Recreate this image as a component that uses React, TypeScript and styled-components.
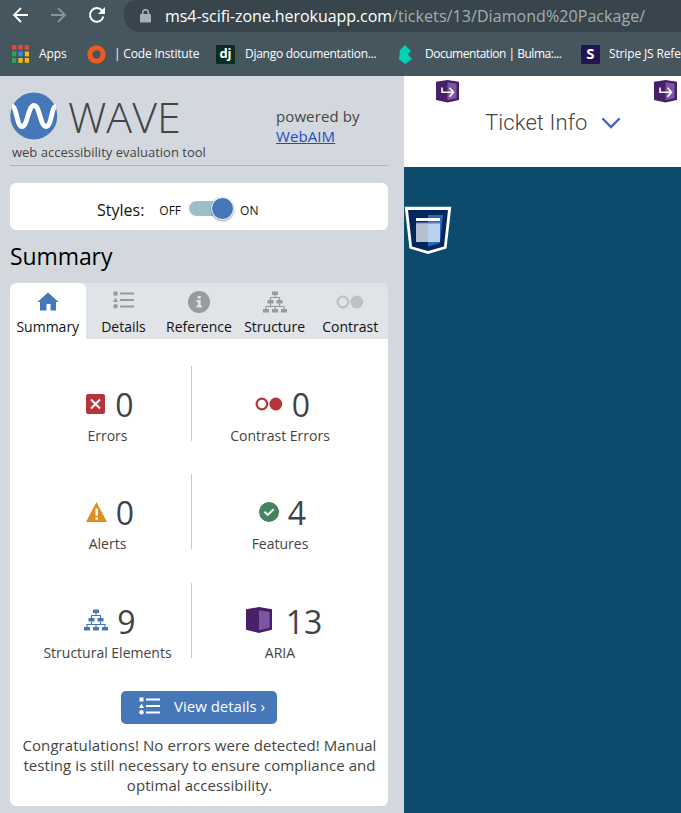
import React from "react";
import styled, { createGlobalStyle, css } from "styled-components";

const GlobalStyle = createGlobalStyle`
  * { box-sizing: border-box; }
  html, body { margin: 0; padding: 0; overflow: hidden; }
  body { font-family: "Open Sans", "Noto Sans", sans-serif; color: #3f4347; }
  svg { display: block; flex: none; }
`;

const Screen = styled.div`
  width: 681px;
  height: 813px;
  overflow: hidden;
  display: flex;
  flex-direction: column;
  background: #0c4b6c;
`;

/* Browser chrome */

const Browser = styled.header`
  height: 76px;
  flex: none;
  background: #46565f;
`;

const Toolbar = styled.div`
  height: 32px;
  display: flex;
`;

const NavButtons = styled.div`
  width: 124px;
  padding: 6px 0 0 12px;
  display: flex;
  gap: 21px;
`;

const AddressBar = styled.div`
  flex: 1;
  display: flex;
  align-items: center;
  padding: 0 0 1px 16px;
  background: #38454c;
  border-radius: 12px 0 0 16px;
  white-space: nowrap;
`;

const Url = styled.div`
  margin-left: 14px;
  font: 400 16px/24px "Open Sans", sans-serif;
  letter-spacing: -0.06px;
  color: #fff;
`;

const UrlPath = styled.span`
  color: #a5adb2;
  letter-spacing: 0.07px;
`;

const Bookmarks = styled.nav`
  height: 44px;
  padding-left: 12px;
  display: flex;
  overflow: hidden;
  white-space: nowrap;
`;

const Bookmark = styled.div<{ $width: number; $gap: number; $spacing: number }>`
  width: ${(p) => p.$width}px;
  flex: none;
  display: flex;
  align-items: center;
  gap: ${(p) => p.$gap}px;
  font: 400 12px/18px "Open Sans", sans-serif;
  letter-spacing: ${(p) => p.$spacing}px;
  color: #fff;
`;

const Favicon = styled.span<{ $bg: string; $size: number }>`
  width: 19px;
  height: 19px;
  flex: none;
  display: flex;
  justify-content: center;
  align-items: center;
  padding-bottom: 2px;
  background: ${(p) => p.$bg};
  border-radius: 1px;
  font: 700 ${(p) => p.$size}px/17px "Open Sans", sans-serif;
  letter-spacing: 0;
  color: #fff;
`;

/* Content */

const Content = styled.div`
  flex: 1;
  display: flex;
  min-height: 0;
`;

const Sidebar = styled.aside`
  width: 404px;
  flex: none;
  padding: 0 16px 0 10px;
  background: #d3d8df;
`;

const Brand = styled.div`
  height: 90px;
  border-bottom: 1px solid #aeb3bf;
  display: grid;
  grid-template-columns: 266px 1fr;
`;

const LogoRow = styled.div`
  height: 66px;
  padding-top: 16px;
  display: flex;
  gap: 10px;
`;

const Wordmark = styled.div`
  padding-top: 1px;
  font-size: 43px;
  line-height: 48px;
  font-weight: 300;
  color: #444;
`;

const Tagline = styled.div`
  padding-left: 2px;
  font-size: 13px;
  line-height: 20px;
  white-space: nowrap;
  color: #444;
`;

const Powered = styled.div`
  padding-top: 30px;
  font-size: 15px;
  line-height: 20px;
  letter-spacing: 0.1px;
  color: #444;
`;

const Link = styled.a`
  color: #1a4fc4;
  text-decoration: underline;
`;

const StylesBox = styled.div`
  height: 47px;
  margin-top: 17px;
  padding: 6px 0 0 87px;
  display: flex;
  align-items: center;
  border-radius: 6px;
  background: #fff;
  font-size: 16px;
  color: #111;
`;

const SwitchLabel = styled.span<{ $left: number; $right?: number }>`
  margin: 1px ${(p) => p.$right ?? 0}px 0 ${(p) => p.$left}px;
  font-size: 12px;
`;

const Track = styled.div`
  width: 45px;
  height: 15px;
  margin-bottom: 2px;
  border-radius: 8px;
  background: #9cbfc7;
  display: flex;
  justify-content: flex-end;
  align-items: center;
`;

const Knob = styled.div`
  width: 23px;
  height: 23px;
  flex: none;
  border-radius: 50%;
  border: 1px solid #fff;
  background: #4677b8;
  box-shadow: 0 1px 2px rgba(0, 0, 0, 0.35);
`;

const Title = styled.h1`
  margin: 10px 0 0;
  height: 43px;
  font-size: 23px;
  line-height: 32px;
  font-weight: 400;
  letter-spacing: -0.1px;
  color: #000;
`;

const Tabs = styled.div`
  height: 56px;
  display: grid;
  grid-template-columns: repeat(5, 1fr);
  border-radius: 6px 6px 0 0;
  overflow: hidden;
  background: #e0e3e8;
`;

const Tab = styled.div<{ $active?: boolean }>`
  display: flex;
  flex-direction: column;
  align-items: center;
  font-size: 14px;
  line-height: 20px;
  white-space: nowrap;
  color: #111;
  ${(p) =>
    p.$active &&
    css`
      background: #fff;
      border-radius: 6px 6px 0 0;
    `}
`;

const TabIcon = styled.div<{ $raised?: boolean }>`
  height: 34px;
  padding-top: ${(p) => (p.$raised ? 0 : 3)}px;
  display: flex;
  align-items: center;
`;

const Panel = styled.section`
  height: 467px;
  padding: 27px 10px 0 14px;
  border-radius: 0 0 6px 6px;
  background: #fff;
`;

const Stats = styled.div`
  display: grid;
  grid-template-columns: 168px 176px;
  grid-auto-rows: 75px;
  row-gap: 33.4px;
`;

const Stat = styled.div<{ $divided?: boolean }>`
  border-right: ${(p) => (p.$divided ? "1px solid #c6c8ca" : "0")};
  display: flex;
  flex-direction: column;
  align-items: center;
  padding-top: 17px;
`;

const StatValue = styled.div<{ $gap: number }>`
  height: 43px;
  padding-left: ${(p) => (p.$gap > 10 ? 8 : 5)}px;
  display: flex;
  align-items: center;
  gap: ${(p) => p.$gap}px;
  font-size: 32px;
  line-height: 43px;
  color: #3f4347;
`;

const StatIcon = styled.span`
  margin-bottom: 2px;
`;

const StatLabel = styled.div`
  font-size: 14px;
  line-height: 19px;
  white-space: nowrap;
  color: #444;
`;

const DetailsButton = styled.button`
  width: 156px;
  height: 33px;
  margin: 33px 0 0 97px;
  padding: 0 0 2px 18px;
  display: flex;
  align-items: center;
  gap: 14px;
  border: 0;
  border-radius: 5px;
  background: #4677b8;
  color: #fff;
  font: 400 15px/20px "Open Sans", sans-serif;
  white-space: nowrap;
`;

const Message = styled.p`
  margin: 11px -2px 0 -5px;
  text-align: center;
  font-size: 15px;
  line-height: 20px;
  letter-spacing: 0.07px;
  white-space: nowrap;
  color: #444;
`;

const Site = styled.main`
  flex: 1;
  min-width: 0;
`;

const TicketBar = styled.div`
  height: 91px;
  padding: 4px 4px 0 32px;
  background: #fff;
`;

const Markers = styled.div`
  display: flex;
  justify-content: space-between;
`;

const TicketTitle = styled.div`
  padding: 4px 0 0 49px;
  display: flex;
  align-items: center;
  gap: 13px;
  font: 300 22px/32px Roboto, sans-serif;
  letter-spacing: 0.1px;
  color: #444;
  white-space: nowrap;
`;

const PageArea = styled.div`
  padding-top: 39px;
`;

/* Icons */

const ArrowIcon = ({ back }: { back?: boolean }) => (
  <svg width="17" height="18" viewBox="0 0 17 18" fill="none" stroke={back ? "#fff" : "#87929a"} strokeWidth="1.8">
    <path d={back ? "M16 9H2M9 2 2 9l7 7" : "M1 9h14M8 2l7 7-7 7"} />
  </svg>
);

const ReloadIcon = () => (
  <svg width="18" height="18" viewBox="0 0 18 18">
    <path d="M15.4 10.6a6.8 6.8 0 1 1-1.5-6.2l1.5 1.8" fill="none" stroke="#fff" strokeWidth="2" />
    <path d="M17 1v7h-7z" fill="#fff" />
  </svg>
);

const LockIcon = () => (
  <svg width="11" height="14" viewBox="0 0 11 14">
    <path d="M2.7 6V3.5a2.8 2.8 0 0 1 5.6 0V6" fill="none" stroke="#a9afb3" strokeWidth="1.6" />
    <rect y="5" width="11" height="8.5" rx="1" fill="#a9afb3" />
  </svg>
);

const appColors = ["#e8453c", "#e8453c", "#e8453c", "#34a05f", "#2f8de4", "#f2b91d", "#34a05f", "#f2b91d", "#f2b91d"];

const AppsIcon = () => (
  <svg width="17" height="18" viewBox="0 0 17 18">
    {appColors.map((c, i) => (
      <rect key={i} x={(i % 3) * 6.4} y={Math.floor(i / 3) * 6.5} width="4.3" height="4.8" fill={c} />
    ))}
  </svg>
);

const RingIcon = () => (
  <svg width="19" height="19" viewBox="0 0 19 19">
    <circle cx="9.5" cy="9.5" r="6.7" fill="none" stroke="#ee5a24" strokeWidth="5" />
  </svg>
);

const BulmaIcon = () => (
  <svg width="13" height="19" viewBox="0 0 13 19">
    <path d="M6 0 12 6 9 9.3 13 14 6.3 19 0 14.5 1 5z" fill="#00d1b2" />
  </svg>
);

const WaveLogo = () => (
  <svg width="48" height="48" viewBox="0 0 48 48">
    <circle cx="23.8" cy="24" r="23.5" fill="#4677b8" />
    <path
      d="M2 14.5C7 14.5 6.500 34.500 12 34.500S18 13.500 24 13.500s6 21 12 21S41 14.500 46 14.500"
      fill="none"
      stroke="#fff"
      strokeWidth="4.8"
    />
  </svg>
);

const HomeIcon = () => (
  <svg width="22" height="19" viewBox="0 0 22 19">
    <path d="M11 .5 21.500 10H19v8.500h-5.500V12h-4v6.500H3V10H.5z" fill="#4677b8" />
  </svg>
);

const ListIcon = ({ color }: { color: string }) => (
  <svg width="21" height="18" viewBox="0 0 21 18" fill={color}>
    <rect x=".5" y=".5" width="4" height="4" />
    <path d="M2.500 6.500 5 11H0z" />
    <circle cx="2.500" cy="15.300" r="2.200" />
    <rect x="7" y="1.500" width="14" height="2" />
    <rect x="7" y="8" width="14" height="2" />
    <rect x="7" y="14.500" width="14" height="2" />
  </svg>
);

const InfoIcon = () => (
  <svg width="22" height="22" viewBox="0 0 22 22">
    <circle cx="11" cy="11" r="11" fill="#999a9c" />
    <rect x="9.700" y="5" width="3" height="2.600" fill="#e0e3e8" />
    <path d="M8.500 9h4.200v5.500H14v2H8.500v-2h1.400V11H8.500z" fill="#e0e3e8" />
  </svg>
);

const TreeIcon = ({ color }: { color: string }) => (
  <svg width="24" height="22" viewBox="0 0 24 22" fill={color}>
    <rect x="9" y=".5" width="6" height="3.500" />
    <rect x="4.500" y="9" width="6" height="3.500" />
    <rect x="13.500" y="9" width="6" height="3.500" />
    <rect x="0" y="18" width="6" height="3.500" />
    <rect x="9" y="18" width="6" height="3.500" />
    <rect x="18" y="18" width="6" height="3.500" />
    <path
      d="M12 3.500v3M7.500 9.500V6.500h9v3M7.500 12.500v3M16.500 12.500v3M3 18.500v-3h18v3M12 15.500v3"
      fill="none"
      stroke={color}
      strokeWidth="1.200"
    />
  </svg>
);

const ContrastIcon = ({ color }: { color: string }) => (
  <svg width="28" height="14" viewBox="0 0 28 14">
    <circle cx="6.900" cy="7" r="5.300" fill="none" stroke={color} strokeWidth="2.200" />
    <circle cx="20.800" cy="7" r="6.400" fill={color} />
  </svg>
);

const ErrorIcon = () => (
  <svg width="19" height="20" viewBox="0 0 19 20">
    <rect width="19" height="20" rx="2" fill="#b63538" />
    <path d="m5 5.500 9 9m0-9-9 9" stroke="#fff" strokeWidth="2" />
  </svg>
);

const AlertIcon = () => (
  <svg width="21" height="20" viewBox="0 0 21 20">
    <path d="M10.500 0 21 20H0z" fill="#df8e20" />
    <path d="M9.500 6.500h2.400v7.300H9.500zM9.500 15.300h2.400v2.400H9.500z" fill="#fff" />
  </svg>
);

const CheckIcon = () => (
  <svg width="20" height="20" viewBox="0 0 20 20">
    <circle cx="10" cy="10" r="10" fill="#43835f" />
    <path d="m5.500 9.700 3.200 3.200 6-5.700" fill="none" stroke="#fff" strokeWidth="2" />
  </svg>
);

const AriaIcon = () => (
  <svg width="26" height="26" viewBox="0 0 26 26">
    <path d="M0 2.300 13 0l13 2.300v20.400L13 26 0 22.700z" fill="#472067" />
    <path d="M13 3.200 23.500 5v15.800L13 23.300z" fill="#7c56a0" />
  </svg>
);

const MarkerIcon = () => (
  <svg width="23" height="23" viewBox="0 0 23 23">
    <path d="M0 1.700 11.500 0 23 1.700v18.200L11.500 22.500 0 19.900z" fill="#472067" />
    <path d="m11.500 2.300 9 1.400V18l-9 2.300z" fill="#7c56a0" />
    <path d="M6 7.500v4.700h11M13.500 7.700l4 4.500-4 4.500" fill="none" stroke="#fff" strokeWidth="1.600" />
  </svg>
);

const ChevronIcon = () => (
  <svg width="20" height="12" viewBox="0 0 20 12" fill="none" stroke="#485fc7" strokeWidth="2.400" strokeLinecap="round">
    <path d="m2 2 8 8 8-8" />
  </svg>
);

const RegionIcon = () => (
  <svg width="48" height="49" viewBox="0 0 48 49">
    <path d="M.7.7h46.600L42.500 42.500 24 48 5.500 42.500z" fill="#fff" />
    <path d="M4 4h40l-4 36.400L24 45 8 40.400z" fill="#03265b" />
    <path d="M24 9h15l-3 28-12 3.500z" fill="#2868c5" />
    <path d="M12 18h12v18H12z" fill="#b4c0d0" />
    <path d="M24 18h12v18H24z" fill="#b9d2f0" />
    <path d="M12 12h24v3H12z" fill="#fff" />
    <path d="M12 16.500h24v1.500H12z" fill="#8fa3c4" />
  </svg>
);

const tabs = [
  { label: "Summary", icon: <HomeIcon />, active: true },
  { label: "Details", icon: <ListIcon color="#999a9c" />, raised: true },
  { label: "Reference", icon: <InfoIcon /> },
  { label: "Structure", icon: <TreeIcon color="#999a9c" /> },
  { label: "Contrast", icon: <ContrastIcon color="#bfc0c2" /> },
];

const stats = [
  { label: "Errors", value: 0, gap: 10, icon: <ErrorIcon /> },
  { label: "Contrast Errors", value: 0, gap: 9, icon: <ContrastIcon color="#b63538" /> },
  { label: "Alerts", value: 0, gap: 9, icon: <AlertIcon /> },
  { label: "Features", value: 4, gap: 9, icon: <CheckIcon /> },
  { label: "Structural Elements", value: 9, gap: 9, icon: <TreeIcon color="#4677b8" /> },
  { label: "ARIA", value: 13, gap: 14, icon: <AriaIcon /> },
];

export default function App() {
  return (
    <Screen>
      <GlobalStyle />
      <Browser>
        <Toolbar>
          <NavButtons>
            <ArrowIcon back />
            <ArrowIcon />
            <ReloadIcon />
          </NavButtons>
          <AddressBar>
            <LockIcon />
            <Url>
              ms4-scifi-zone.herokuapp.com<UrlPath>/tickets/13/Diamond%20Package/</UrlPath>
            </Url>
          </AddressBar>
        </Toolbar>
        <Bookmarks>
          <Bookmark $width={75} $gap={10} $spacing={-0.1}>
            <AppsIcon />
            Apps
          </Bookmark>
          <Bookmark $width={129} $gap={8} $spacing={-0.18}>
            <RingIcon />| Code Institute
          </Bookmark>
          <Bookmark $width={183} $gap={10} $spacing={-0.28}>
            <Favicon $bg="#092e20" $size={13}>dj</Favicon>
            Django documentation...
          </Bookmark>
          <Bookmark $width={182} $gap={13} $spacing={-0.48}>
            <BulmaIcon />
            Documentation | Bulma:...
          </Bookmark>
          <Bookmark $width={100} $gap={9} $spacing={-0.15}>
            <Favicon $bg="#211551" $size={15}>S</Favicon>
            Stripe JS Refe
          </Bookmark>
        </Bookmarks>
      </Browser>
      <Content>
        <Sidebar>
          <Brand>
            <div>
              <LogoRow>
                <WaveLogo />
                <Wordmark>WAVE</Wordmark>
              </LogoRow>
              <Tagline>web accessibility evaluation tool</Tagline>
            </div>
            <Powered>
              powered by
              <br />
              <Link>WebAIM</Link>
            </Powered>
          </Brand>
          <StylesBox>
            Styles:
            <SwitchLabel $left={15} $right={8}>OFF</SwitchLabel>
            <Track>
              <Knob />
            </Track>
            <SwitchLabel $left={6}>ON</SwitchLabel>
          </StylesBox>
          <Title>Summary</Title>
          <Tabs>
            {tabs.map((t) => (
              <Tab key={t.label} $active={t.active}>
                <TabIcon $raised={t.raised}>{t.icon}</TabIcon>
                {t.label}
              </Tab>
            ))}
          </Tabs>
          <Panel>
            <Stats>
              {stats.map((s, i) => (
                <Stat key={s.label} $divided={i % 2 === 0}>
                  <StatValue $gap={s.gap}>
                    <StatIcon>{s.icon}</StatIcon>
                    {s.value}
                  </StatValue>
                  <StatLabel>{s.label}</StatLabel>
                </Stat>
              ))}
            </Stats>
            <DetailsButton>
              <ListIcon color="#fff" />
              View details ›
            </DetailsButton>
            <Message>
              Congratulations! No errors were detected! Manual
              <br />
              testing is still necessary to ensure compliance and
              <br />
              optimal accessibility.
            </Message>
          </Panel>
        </Sidebar>
        <Site>
          <TicketBar>
            <Markers>
              <MarkerIcon />
              <MarkerIcon />
            </Markers>
            <TicketTitle>
              Ticket Info
              <ChevronIcon />
            </TicketTitle>
          </TicketBar>
          <PageArea>
            <RegionIcon />
          </PageArea>
        </Site>
      </Content>
    </Screen>
  );
}
